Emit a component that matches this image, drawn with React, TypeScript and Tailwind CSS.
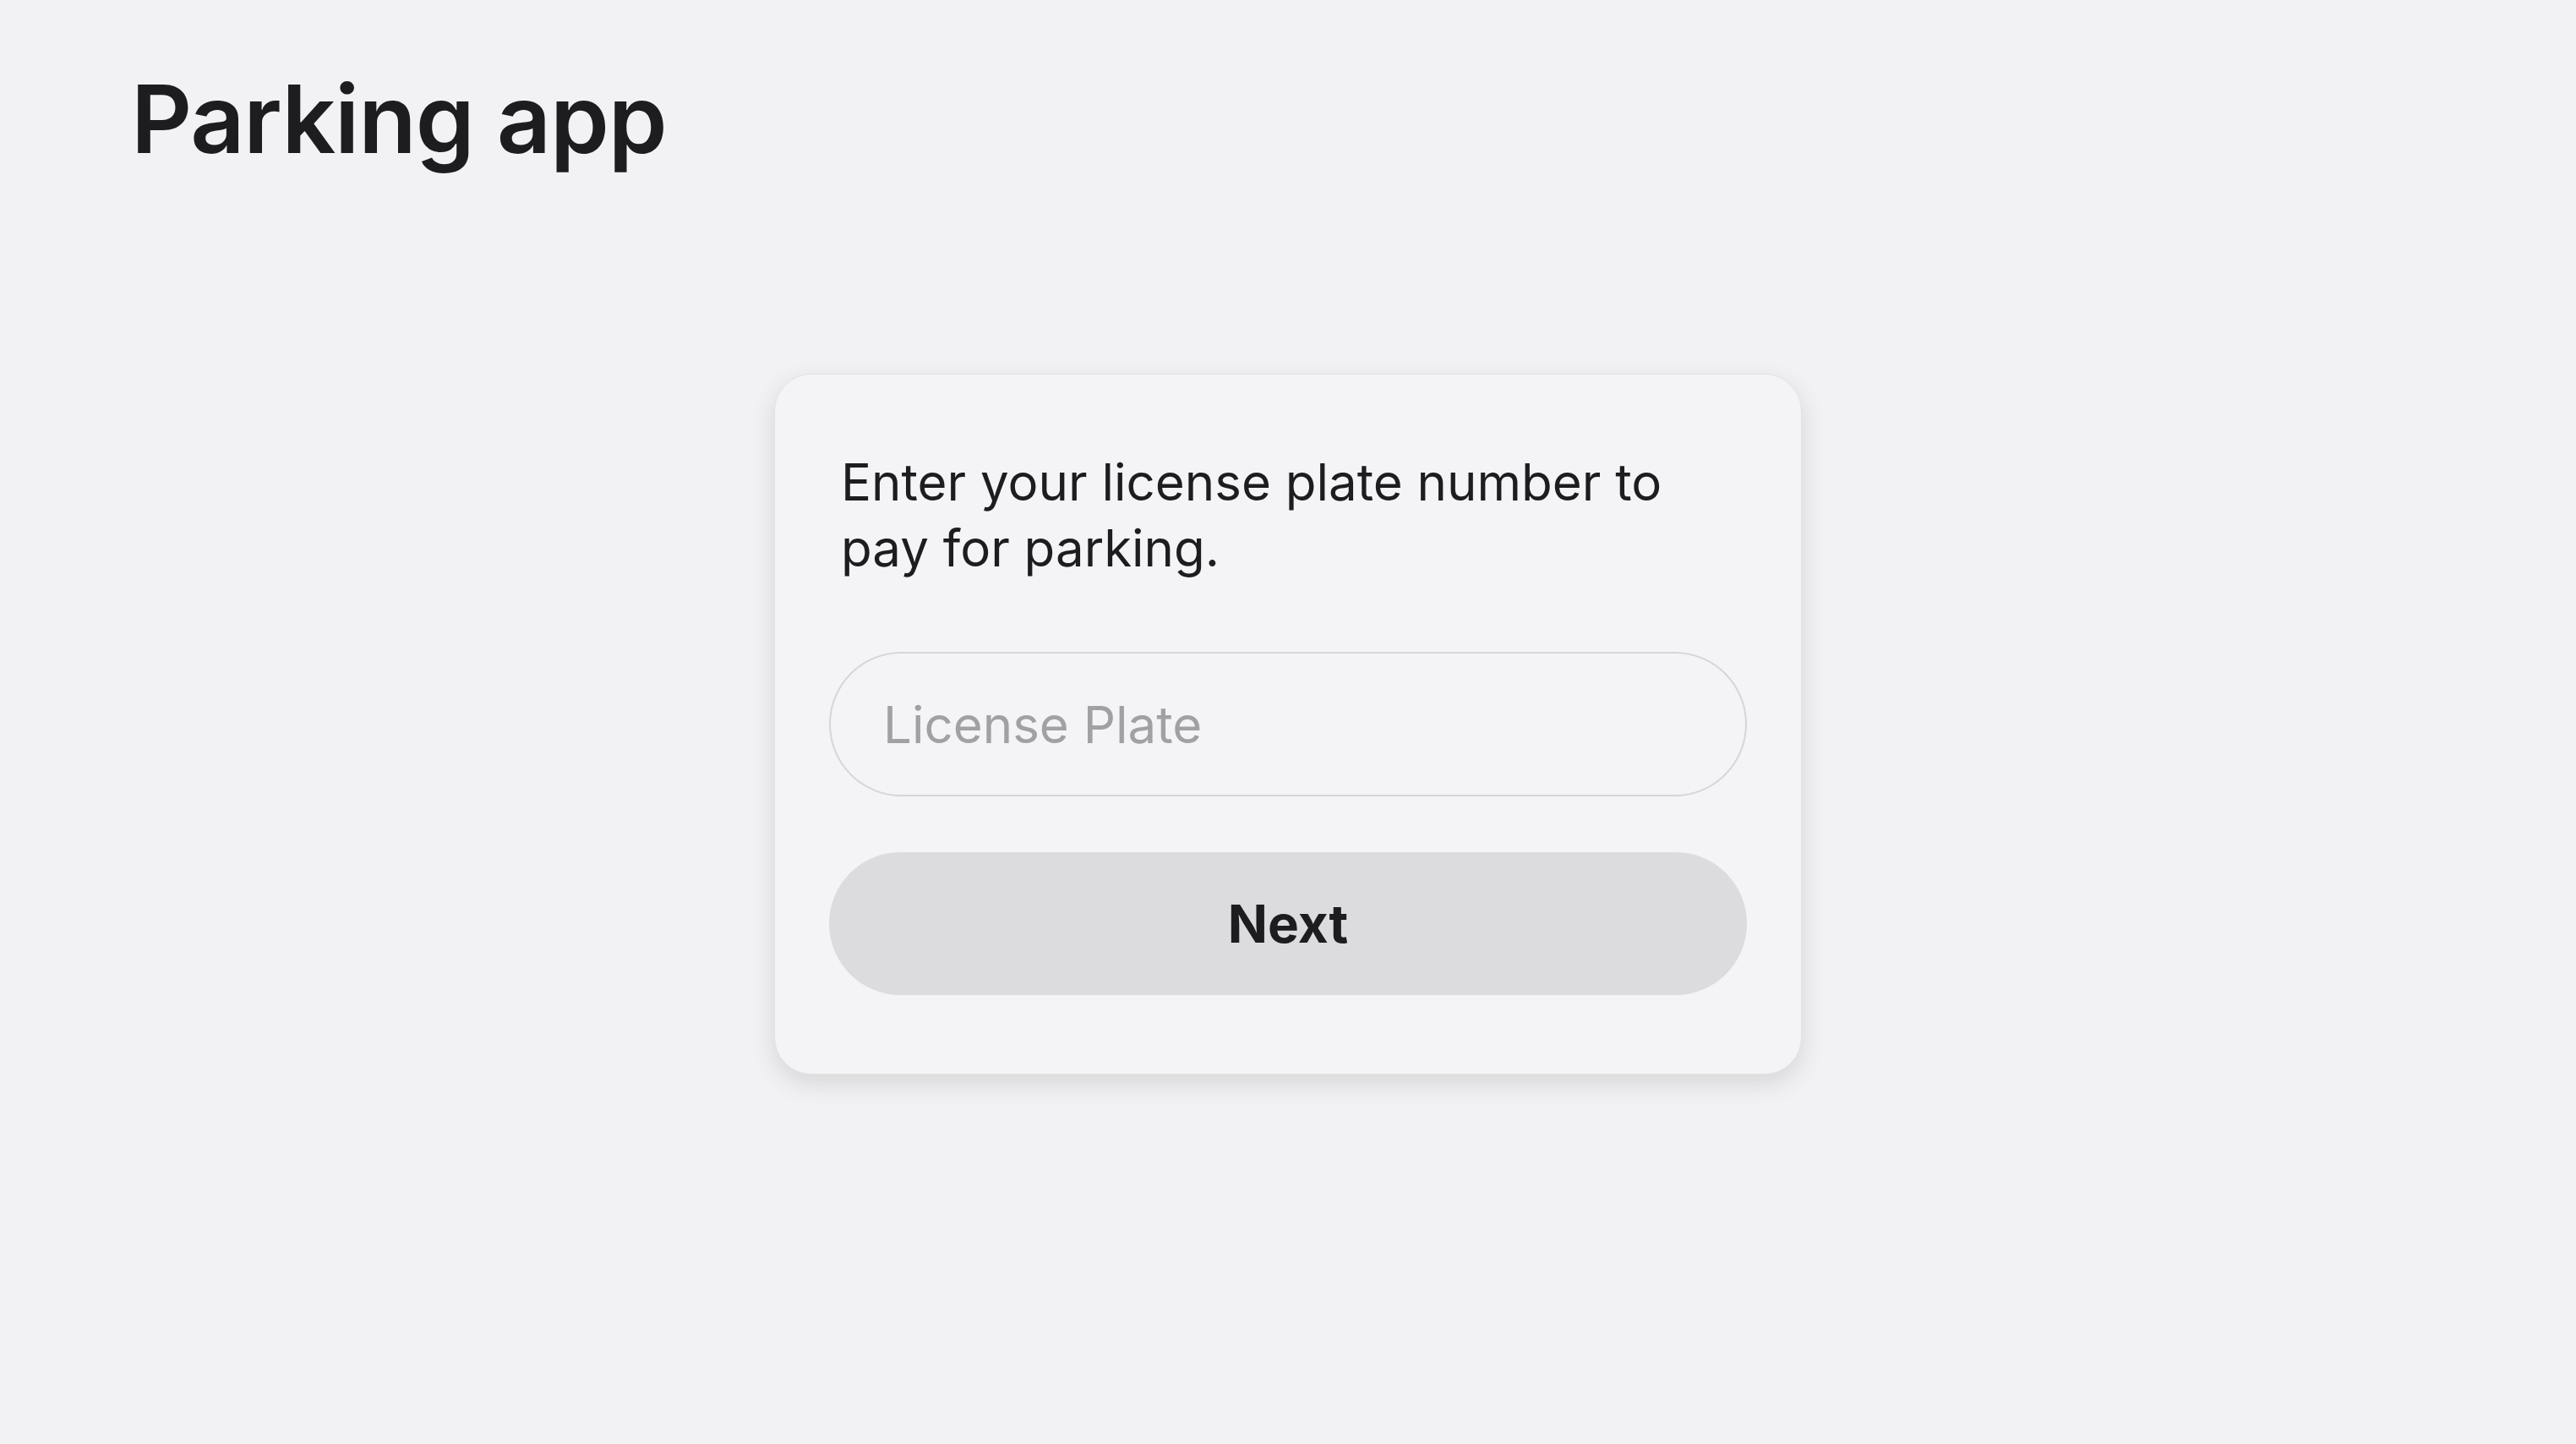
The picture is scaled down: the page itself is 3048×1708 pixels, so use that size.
import React from "react";

const App = () => {
  return (
    <div className="min-h-screen bg-[#f2f2f4] font-['Inter',sans-serif] text-[#1d1d1f]">
      <header className="px-[155px] pt-[84px]">
        <h1 className="text-[112px] font-semibold leading-none tracking-[-0.01em]">Parking app</h1>
      </header>

      <main className="flex justify-center pt-[246px]">
        <div className="w-[1216px] rounded-[44px] border border-[#e2e2e4] bg-[#f4f4f6] px-[64px] pt-[88px] pb-[93px] shadow-[0_10px_30px_rgba(0,0,0,0.12)]">
          <p className="px-[14px] text-[60px] leading-[78px]">
            Enter your license plate number to pay for parking.
          </p>
          <input
            type="text"
            placeholder="License Plate"
            className="mt-[84px] h-[171px] w-full rounded-full border-2 border-[#d6d6d9] bg-transparent px-[62px] text-[60px] outline-none placeholder:text-[#a1a1a5]"
          />
          <button className="mt-[66px] h-[169px] w-full rounded-full bg-[#dcdcde] text-[62px] font-bold">
            Next
          </button>
        </div>
      </main>
    </div>
  );
};

export default App;
